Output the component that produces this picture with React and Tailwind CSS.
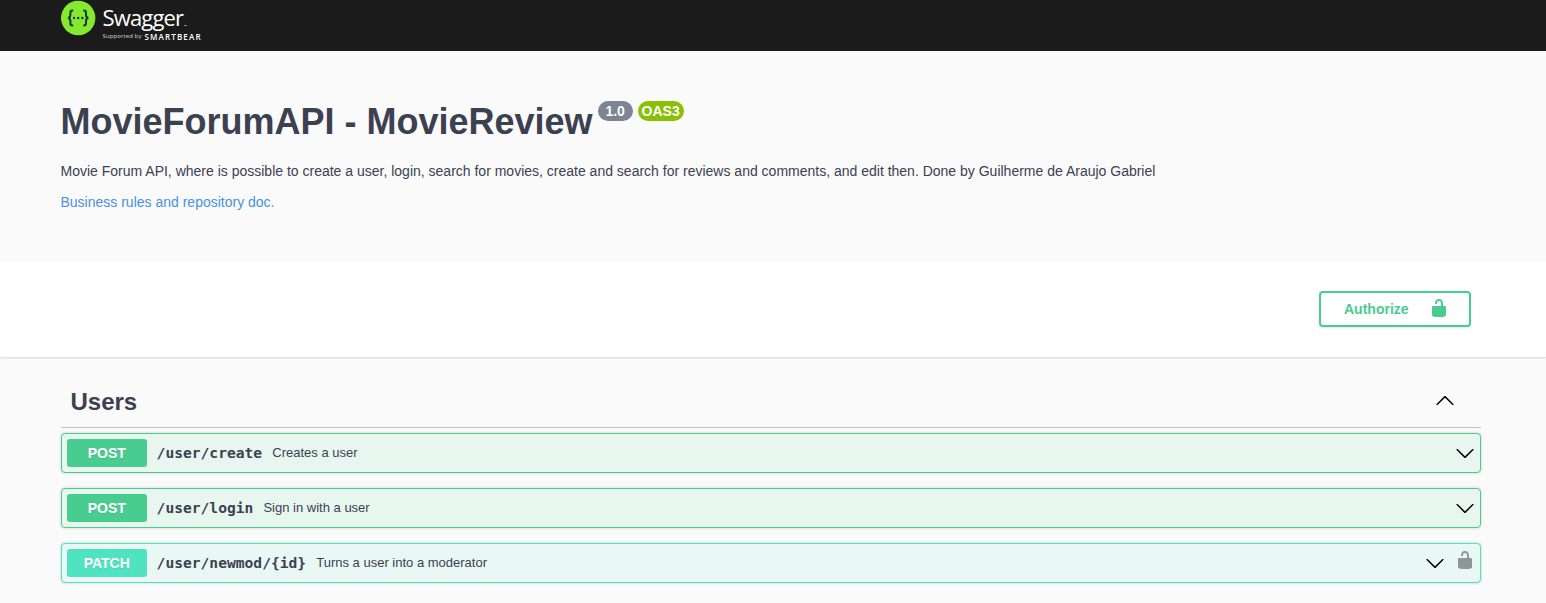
const DOWN =
  "M17.418 6.109c.272-.268.709-.268.979 0s.271.701 0 .969l-7.908 7.83c-.27.268-.707.268-.979 0l-7.908-7.83c-.27-.268-.27-.701 0-.969.271-.268.709-.268.979 0L10 13.25l7.418-7.141z";
const UP =
  "M17.418 14.908c.272.268.709.268.979 0s.271-.701 0-.969l-7.908-7.83c-.27-.268-.707-.268-.979 0l-7.908 7.83c-.27.268-.27.701 0 .969.271.268.709.268.979 0L10 7.767l7.418 7.141z";
const UNLOCKED =
  "M15.8 8H14V5.6C14 2.703 12.665 1 10 1 7.334 1 6 2.703 6 5.6V6h2v-.801C8 3.754 8.797 3 10 3c1.203 0 2 .754 2 2.199V8H4c-.553 0-1 .646-1 1.199V17c0 .549.428 1.139.951 1.307l1.197.387C5.672 18.861 6.55 19 7.1 19h5.8c.549 0 1.428-.139 1.951-.307l1.196-.387c.524-.167.953-.757.953-1.306V9.199C17 8.646 16.352 8 15.8 8z";

function Icon({ d, className = "" }) {
  return (
    <svg viewBox="0 0 20 20" width="20" height="20" fill="currentColor" className={`shrink-0 ${className}`}>
      <path d={d} />
    </svg>
  );
}

function Logo() {
  return (
    <a className="flex h-[41px] items-start text-white">
      <svg width="36" height="36" viewBox="0 0 36 36" className="shrink-0">
        <circle cx="17.2" cy="18" r="17.2" fill="#85ea2d" />
        <g fill="none" stroke="#173647" strokeWidth="2">
          <path d="M12.2 10.4h-.8c-1.6 0-2 .9-2 2.3v2.4c0 1.7-.6 2.7-2.4 2.9 1.8.2 2.4 1.2 2.4 2.9v2.4c0 1.4.4 2.3 2 2.3h.8" />
          <path d="M22.2 10.4h.8c1.6 0 2 .9 2 2.3v2.4c0 1.7.6 2.7 2.4 2.9-1.8.2-2.4 1.2-2.4 2.9v2.4c0 1.4-.4 2.3-2 2.3h-.8" />
        </g>
        <g fill="#173647">
          <circle cx="13" cy="18" r="1.2" />
          <circle cx="17.2" cy="18" r="1.2" />
          <circle cx="21.4" cy="18" r="1.2" />
        </g>
      </svg>
      <div className="ml-[5.5px] flex flex-col whitespace-nowrap font-['Open_Sans','Noto_Sans',sans-serif]">
        <div className="flex items-end pt-[3px]">
          <span className="h-[29px] text-[22px] leading-[29px] tracking-[-0.85px]">Swagger</span>
          <span className="mb-[6px] ml-px h-px w-[3px] bg-[#8a8a8a]" />
        </div>
        <div className="flex h-[9px] items-center leading-[9px]">
          <span className="w-[42px] text-[6px] tracking-[0.1px] text-[#d8d8d8]">Supported by</span>
          <span className="text-[8px] font-semibold tracking-[1.15px]">SMARTBEAR</span>
        </div>
      </div>
    </a>
  );
}

const STYLES = {
  POST: { row: "border-[#49cc90] bg-[#e8f6f0]", badge: "bg-[#49cc90]" },
  PATCH: { row: "border-[#50e3c2] bg-[#e9f8f5]", badge: "bg-[#50e3c2]" },
};

const OPERATIONS = [
  { method: "POST", path: "/user/create", summary: "Creates a user" },
  { method: "POST", path: "/user/login", summary: "Sign in with a user" },
  { method: "PATCH", path: "/user/newmod/{id}", summary: "Turns a user into a moderator", secured: true },
];

function Operation({ method, path, summary, secured }) {
  const style = STYLES[method];
  return (
    <div className={`flex h-10 items-center rounded border p-[5px] shadow-[0_0_3px_rgba(0,0,0,0.19)] ${style.row}`}>
      <span
        className={`flex h-7 w-20 items-center justify-center rounded-[3px] pr-[0.5px] text-[14px] font-bold text-white [text-shadow:0_1px_0_rgba(0,0,0,0.1)] ${style.badge}`}
      >
        {method}
      </span>
      <span className="pb-px pl-[9.6px] pr-[10.1px] font-['DejaVu_Sans_Mono',monospace] text-[14.62px] font-bold">
        {path}
      </span>
      <span className="flex-1 text-[13px]">{summary}</span>
      <Icon d={DOWN} className="text-black" />
      {secured && <Icon d={UNLOCKED} className="mb-[7px] ml-[10px] text-[#8e9795]" />}
    </div>
  );
}

export default function App() {
  return (
    <div className="h-[603px] overflow-hidden bg-[#fafafa] font-['Liberation_Sans',Arial,sans-serif] text-[#3b4151]">
      <header className="h-[51px] bg-[#1b1b1b] pl-[61px]">
        <Logo />
      </header>

      <section className="h-[210px] pl-[60.5px] pt-[50px]">
        <div className="flex items-start">
          <h1 className="text-[36px] font-bold leading-[42px]">MovieForumAPI - MovieReview</h1>
          <span className="ml-[5px] flex h-5 w-[35px] items-center justify-center rounded-full bg-[#7d8492] text-[14px] font-bold text-white">
            1.0
          </span>
          <span className="ml-[5px] flex h-5 w-[46px] items-center justify-center rounded-full bg-[#89bf04] text-[14px] font-bold text-white">
            OAS3
          </span>
        </div>
        <p className="mt-[18px] text-[14px] leading-5">
          Movie Forum API, where is possible to create a user, login, search for movies, create and search for reviews
          and comments, and edit then. Done by Guilherme de Araujo Gabriel
        </p>
        <a className="mt-[11px] block text-[14px] leading-5 text-[#4990e2]">Business rules and repository doc.</a>
      </section>

      <section className="relative flex h-24 items-center justify-end bg-white pr-[75px] shadow-[0_1px_2px_rgba(0,0,0,0.15)]">
        <button className="flex h-9 w-[152px] items-center justify-between rounded border-2 border-[#49cc90] pl-[23px] pr-5 text-[14px] font-bold text-[#49cc90] shadow-[0_1px_2px_rgba(0,0,0,0.1)]">
          Authorize
          <Icon d={UNLOCKED} className="mb-[2px]" />
        </button>
      </section>

      <main className="ml-[61px] w-[1420px] pt-5">
        <div className="mb-[5px] flex h-[51px] items-center justify-between border-b border-[rgba(59,65,81,0.3)] pl-[9.5px] pr-[26px]">
          <h2 className="text-[24px] font-bold leading-[28px]">Users</h2>
          <Icon d={UP} className="mb-[4px] text-black" />
        </div>
        <div className="flex flex-col gap-[15px]">
          {OPERATIONS.map((operation) => (
            <Operation key={operation.path} {...operation} />
          ))}
        </div>
      </main>
    </div>
  );
}
